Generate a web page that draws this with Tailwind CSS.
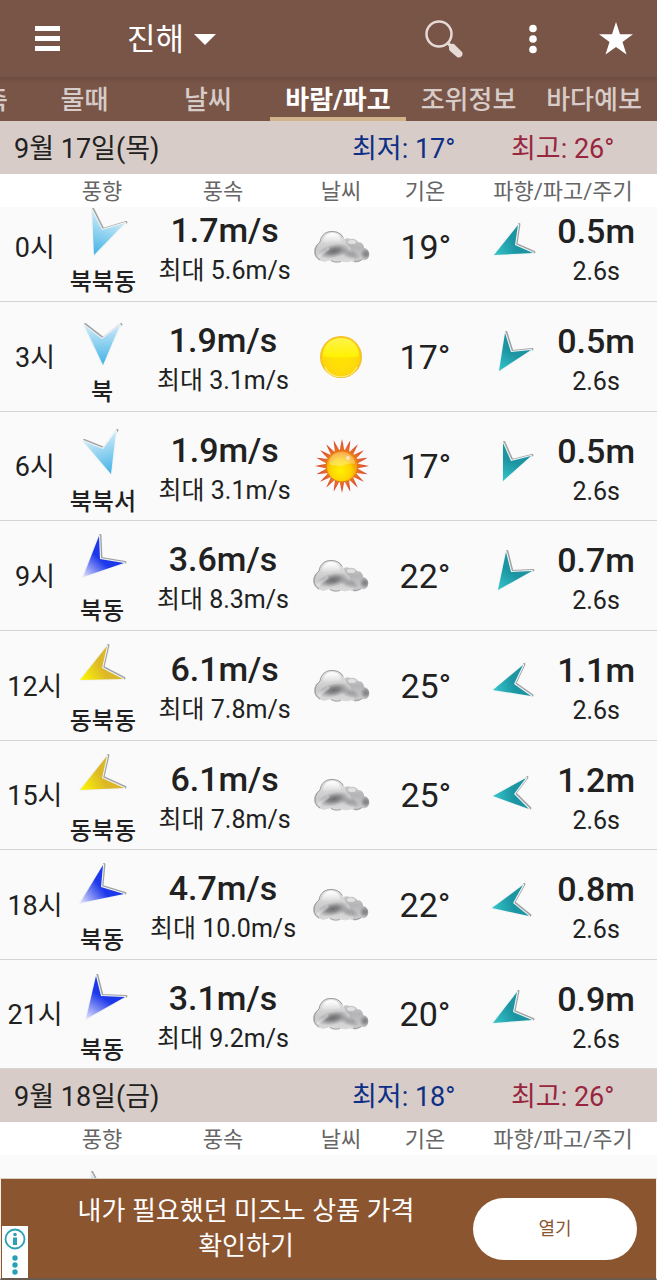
<!DOCTYPE html>
<html lang="ko">
<head>
    <meta charset="UTF-8">
    <meta name="viewport" content="width=device-width, initial-scale=1.0">
    <script src="https://cdn.jsdelivr.net/npm/@tailwindcss/browser@4"></script>
    <title>진해 - 바람/파고</title>
</head>
<body class="h-screen flex flex-col overflow-hidden bg-[#fafafa] text-[#212121] font-['Roboto','Noto_Sans_CJK_KR',sans-serif]">

    <!-- Shared gradients and weather icons -->
    <svg class="absolute w-0 h-0" aria-hidden="true">
        <defs>
            <linearGradient id="cloudBack" x1="0" y1="0" x2="0" y2="1">
                <stop offset="0" stop-color="#dcdcdc"/>
                <stop offset="0.5" stop-color="#b4b4b6"/>
                <stop offset="1" stop-color="#cfcfd0"/>
            </linearGradient>
            <linearGradient id="cloudFront" x1="0" y1="0" x2="0" y2="1">
                <stop offset="0" stop-color="#e6e6e6"/>
                <stop offset="0.6" stop-color="#c9c9ca"/>
                <stop offset="1" stop-color="#dcdcdd"/>
            </linearGradient>
            <radialGradient id="cloudShade">
                <stop offset="0" stop-color="#6c6c70"/>
                <stop offset="0.4" stop-color="#77777b" stop-opacity="0.8"/>
                <stop offset="1" stop-color="#8c8c90" stop-opacity="0"/>
            </radialGradient>
            <linearGradient id="cloudShine" x1="0" y1="0" x2="0" y2="1">
                <stop offset="0" stop-color="#fff"/>
                <stop offset="1" stop-color="#fff" stop-opacity="0.1"/>
            </linearGradient>
            <linearGradient id="ballTop" x1="0" y1="0" x2="0" y2="1">
                <stop offset="0" stop-color="#fff34a"/>
                <stop offset="1" stop-color="#fff200"/>
            </linearGradient>
            <radialGradient id="ballBody" cx="0.5" cy="0.5" r="0.5">
                <stop offset="0" stop-color="#ffe600"/>
                <stop offset="0.85" stop-color="#ffd80c"/>
                <stop offset="1" stop-color="#f2b824"/>
            </radialGradient>
            <linearGradient id="rays" gradientUnits="userSpaceOnUse" x1="28" y1="1" x2="28" y2="13">
                <stop offset="0" stop-color="#d4382a"/>
                <stop offset="1" stop-color="#ea7a30"/>
            </linearGradient>
            <radialGradient id="sunBody" cx="0.45" cy="0.65" r="0.6">
                <stop offset="0" stop-color="#fff200"/>
                <stop offset="0.55" stop-color="#ffd200"/>
                <stop offset="1" stop-color="#f38510"/>
            </radialGradient>
            <clipPath id="cloudShape">
                <path d="M6 11C7 3 13 0 18 0c6 0 11 3 12 8 4-1 4-1 7 0 3-1 6 1 7 3 4 0 6 3 6 6 4 1 6 4 5 8-1 4-4 5-7 4-3 3-8 3-11 1-4 2-8 1-10 0-4 2-8 1-11-1-4 2-9 2-12-1-6-4-5-13 2-17z"/>
            </clipPath>
        </defs>
        <symbol id="cloud" viewBox="0 0 56 32">
            <g clip-path="url(#cloudShape)">
                <path d="M0 0h56v32H0z" fill="url(#cloudBack)"/>
                <path d="M0 0h28c4 8 2 12 8 16l6 16H0z" fill="url(#cloudFront)"/>
                <ellipse cx="20" cy="20" rx="16" ry="7" transform="rotate(-12 20 20)" fill="url(#cloudShade)"/>
                <ellipse cx="36" cy="23" rx="11" ry="5" transform="rotate(20 36 23)" fill="url(#cloudShade)" opacity="0.5"/>
                <ellipse cx="52" cy="23" rx="6" ry="6" fill="url(#cloudShade)" opacity="0.8"/>
                <path d="M9 12c0-6 4-10 9-10s9 3 9 9c-6-1-11 2-18 1z" fill="url(#cloudShine)"/>
                <ellipse cx="38" cy="11" rx="4" ry="2" fill="#fff" opacity="0.5"/>
                <path d="M5 26c2-5 6-4 10-9" fill="none" stroke="#fff" stroke-width="3" opacity="0.3"/>
            </g>
            <path d="M6 29C0 26-1 17 6 11 7 4 12 0.500 18 0.500c5 0 9 2 11 6M17 29.500c3 2 7 2 10 1M40 30c3 1 6 0 8-1.500" fill="none" stroke="#8a8a8c" stroke-width="0.800"/>
        </symbol>
        <symbol id="clear" viewBox="0 0 56 56">
            <circle cx="28" cy="28" r="21" fill="url(#ballBody)"/>
            <path d="M10 27c0-12 8-18 18-18s18 6 18 18c-7 2-12 1-18 1s-12 1-18-1z" fill="url(#ballTop)"/>
            <path d="M12 38c5 13 26 13 32 0" fill="none" stroke="#fff07a" stroke-width="1.200"/>
        </symbol>
        <symbol id="sunny" viewBox="0 0 56 56">
            <g id="rayGroup" fill="url(#rays)"></g>
            <circle cx="28" cy="28" r="16" fill="url(#sunBody)" stroke="#d9661a" stroke-width="0.800"/>
            <path d="M15 26c0-8 6-12 13-12s13 5 13 12c-8-2-11 3-16 2-4-1-7 0-10-2z" fill="#fff" opacity="0.3"/>
            <circle cx="34" cy="20" r="2" fill="#fff" opacity="0.6"/>
        </symbol>
    </svg>

    <!-- App bar -->
    <header class="h-[77px] shrink-0 bg-[#795548] text-white flex items-center pl-[35px] pr-6">
        <button aria-label="메뉴" class="w-[26px]">
            <svg viewBox="0 0 26 26" class="w-[26px] h-[26px]" fill="currentColor"><path d="M0 0h25v5H0zM0 10h25v5H0zM0 20h25v5H0z"/></svg>
        </button>
        <button class="ml-[66px] pt-0.5 flex items-center gap-2.5 text-[31px] leading-10">
            진해
            <svg viewBox="0 0 22 12" class="w-[22px] h-3" fill="currentColor"><path d="M0 0h22L11 11z"/></svg>
        </button>
        <div class="ml-auto flex items-center">
            <button aria-label="검색">
                <svg viewBox="0 0 38 38" class="w-[38px] h-[38px] text-[#e6d9d6]">
                    <circle cx="14" cy="14" r="12.500" fill="none" stroke="currentColor" stroke-width="2.500"/>
                    <path d="M22 24l2-2 4 4-3 2z" fill="currentColor"/>
                    <path d="M24 28c0-3 2-5 5-4l8 8c2 3-2 7-5 5l-7-6c-1-1-1-2-1-3z" fill="currentColor"/>
                </svg>
            </button>
            <button aria-label="더보기" class="ml-[66px]">
                <svg viewBox="0 0 8 30" class="w-2 h-[30px]" fill="currentColor"><circle cx="4" cy="4.500" r="3.800"/><circle cx="4" cy="15" r="3.800"/><circle cx="4" cy="25.500" r="3.800"/></svg>
            </button>
            <button aria-label="즐겨찾기" class="ml-[62px]">
                <svg viewBox="0 0 34 33" class="w-[34px] h-[33px]" fill="currentColor"><path d="M17 0l4 12.200h13L23.500 20l4 12.500L17 25 6.500 32.500l4-12.500L0 12.200h13z"/></svg>
            </button>
        </div>
    </header>

    <!-- Tabs -->
    <nav class="h-11 shrink-0 grid grid-cols-[23fr_123fr_124fr_136fr_125fr_126fr] grid-rows-[44px] bg-[#795548] bg-linear-to-b from-[#6e4c40] to-[#795548] to-15% text-[26px] leading-[46px] font-medium text-center text-[#d7ccc8] whitespace-nowrap">
        <a href="#" class="flex justify-end pr-[15px] overflow-hidden">관측</a>
        <a href="#">물때</a>
        <a href="#">날씨</a>
        <a href="#" class="text-white font-bold border-b-4 border-[#d2b48c]">바람/파고</a>
        <a href="#">조위정보</a>
        <a href="#">바다예보</a>
    </nav>

    <!-- Forecast by day -->
    <main id="forecast" class="flex-1 min-h-0 overflow-hidden"></main>

    <!-- Ad banner -->
    <aside class="relative h-[102px] shrink-0 border-t border-b-2 border-x border-t-[#d9cfc4] border-b-[#6b5a50] border-x-[#f5efe8] bg-[#8b5530] flex items-center pl-[18px] pr-[19px]">
        <p class="flex-1 px-10 text-center text-white text-[26px] leading-[35px] break-keep">내가 필요했던 미즈노 상품 가격 확인하기</p>
        <button class="w-[164px] h-[62px] rounded-full bg-white text-[#8b5530] text-lg">열기</button>
        <button aria-label="광고 정보" class="absolute left-px bottom-0 w-[26px] h-[52px] bg-white">
            <svg viewBox="0 0 26 52" class="w-[26px] h-[52px] text-[#2a9fb5]" fill="currentColor">
                <circle cx="13" cy="13" r="9.500" fill="none" stroke="currentColor" stroke-width="1.800"/>
                <circle cx="13" cy="8.500" r="1.800"/><path d="M11 11.500h4V19h-4z"/>
                <circle cx="13" cy="32" r="2.700"/><circle cx="13" cy="39" r="2.700"/><circle cx="13" cy="46" r="2.700"/>
            </svg>
        </button>
    </aside>

    <script>
        // Arrow fill: [colour at the point, colour at the wings]
        const colors = {
            sky: ["#42b2e6", "#cdeaf8"],
            blue: ["#e6e4ff", "#1c38ea"],
            yellow: ["#fffb00", "#dcb828"],
            teal: ["#34c6ca", "#1c94a2"]
        };

        // Arrows: wing, notch, wing, point
        const days = [
            { date: "9월 17일(목)", low: 17, high: 26, scrolled: true, rows: [
                { hour: 0, color: "sky", wind: [19,6, 29,26, 52,19, 21,51], dir: "북북동", speed: "1.7", max: "5.6", sky: "cloud", temp: 19, wave: [31,11, 28,31, 46,39, 7,41], height: "0.5" },
                { hour: 3, color: "sky", wind: [12,11, 30,25, 48,11, 31,51], dir: "북", speed: "1.9", max: "3.1", sky: "clear", temp: 17, wave: [19,9, 25,28, 45,26, 13,47], height: "0.5" },
                { hour: 6, color: "sky", wind: [10,17, 30,25, 43,7, 38,50], dir: "북북서", speed: "1.9", max: "3.1", sky: "sunny", temp: 17, wave: [16,9, 24,27, 44,22, 16,47], height: "0.5" },
                { hour: 9, color: "blue", wind: [27,3, 28,26, 52,30, 11,44], dir: "북동", speed: "3.6", max: "8.3", sky: "cloud", temp: 22, wave: [20,9, 25,29, 46,28, 12,47], height: "0.7" },
                { hour: 12, color: "yellow", wind: [34,3, 29,25, 50,36, 7,37], dir: "동북동", speed: "6.1", max: "7.8", sky: "cloud", temp: 25, wave: [36,12, 27,31, 44,43, 6,37], height: "1.1" },
                { hour: 15, color: "yellow", wind: [34,3, 29,25, 51,35, 7,37], dir: "동북동", speed: "6.1", max: "7.8", sky: "cloud", temp: 25, wave: [39,15, 27,31, 42,46, 6,33], height: "1.2" },
                { hour: 18, color: "blue", wind: [31,3, 29,25, 52,32, 8,41], dir: "북동", speed: "4.7", max: "10.0", sky: "cloud", temp: 22, wave: [37,13, 27,31, 43,44, 6,36], height: "0.8" },
                { hour: 21, color: "blue", wind: [24,4, 29,24, 53,25, 14,47], dir: "북동", speed: "3.1", max: "9.2", sky: "cloud", temp: 20, wave: [31,10, 27,30, 46,38, 7,41], height: "0.9" }
            ]},
            { date: "9월 18일(금)", low: 18, high: 26, rows: [], next: { color: "sky", wind: [19,6, 29,26, 52,19, 21,51] } }
        ];

        let arrowCount = 0;
        function arrow(p, color, cls, size) {
            const id = "arrow" + arrowCount++;
            const [tip, wing] = colors[color];
            // sky arrows fade towards the wings, the others towards the notch
            const x2 = color === "sky" ? (p[0] + p[4]) / 2 : p[2];
            const y2 = color === "sky" ? (p[1] + p[5]) / 2 : p[3];
            return `<svg viewBox="0 0 ${size} ${size}" class="${cls}" stroke-linejoin="round" stroke-linecap="round">
                <linearGradient id="${id}" gradientUnits="userSpaceOnUse" x1="${p[6]}" y1="${p[7]}" x2="${x2}" y2="${y2}">
                    <stop offset="0" stop-color="${tip}"/><stop offset="1" stop-color="${wing}"/>
                </linearGradient>
                <polyline points="${p.slice(0, 6)}" fill="none" stroke="#a2a2a2" stroke-width="2.500" transform="translate(1.200 -0.800)"/>
                <polygon points="${p}" fill="#fff" stroke="#f0f4f5" stroke-width="2.200"/>
                <polygon points="${p}" fill="url(#${id})"/>
            </svg>`;
        }

        function row(r) {
            return `<tr class="h-[110px] nth-[3n]:h-[109px] last:h-[109px] grid grid-cols-[70fr_64fr_178fr_58fr_110fr_66fr_100fr] pr-[11px] text-center whitespace-nowrap border-b border-[#d4d4d4]">
                <th class="self-center pt-0.5 font-normal text-[27px] leading-8">${r.hour}시</th>
                <td class="flex flex-col items-center pt-3 text-2xl leading-9 font-medium">${arrow(r.wind, r.color, "w-[60px] h-[60px] shrink-0", 60)}${r.dir}</td>
                <td class="pt-[17px]">
                    <div class="text-[34px] leading-[42px] font-medium">${r.speed}m/s</div>
                    <div class="text-[25px] leading-10">최대 ${r.max}m/s</div>
                </td>
                <td class="self-center flex justify-center"><svg class="w-14 h-14" role="img"><use href="#${r.sky}"/></svg></td>
                <td class="self-center text-[34px] leading-10">${r.temp}°</td>
                <td class="flex justify-center pt-[22px]">${arrow(r.wave, "teal", "w-[54px] h-[54px]", 54)}</td>
                <td class="pt-[18px]">
                    <div class="text-[34px] leading-[42px] font-medium">${r.height}m</div>
                    <div class="text-[25px] leading-10">2.6s</div>
                </td>
            </tr>`;
        }

        function nextRow(r) {
            return `<tr class="grid grid-cols-[70fr_64fr_512fr] pr-[11px]">
                <td></td>
                <td class="flex justify-center pt-3">${arrow(r.wind, r.color, "w-[60px] h-[60px] shrink-0", 60)}</td>
            </tr>`;
        }

        // Sun rays
        let rays = "";
        for (let a = 0; a < 360; a += 18) {
            rays += `<path d="M25.500 13L28 1l2.500 12z" transform="rotate(${a} 28 28)"/>`;
        }
        document.getElementById("rayGroup").innerHTML = rays;

        document.getElementById("forecast").innerHTML = days.map(day => `
            <section>
                <h2 class="h-[53px] pt-0.5 relative z-10 grid grid-cols-[352fr_159fr_146fr] items-center bg-[#d7ccc8] text-[27px] leading-9">
                    <span class="pl-3.5">${day.date}</span>
                    <span class="text-[#0d2f86]">최저: ${day.low}°</span>
                    <span class="text-[#98263f]">최고: ${day.high}°</span>
                </h2>
                <table class="block">
                    <thead class="block relative z-10 bg-white text-[22px] leading-[35px] text-[#666]">
                        <tr class="h-[33px] grid grid-cols-[70fr_64fr_178fr_58fr_110fr_166fr] pr-[11px] whitespace-nowrap *:font-normal">
                            <td></td><th>풍향</th><th>풍속</th><th>날씨</th><th>기온</th><th>파향/파고/주기</th>
                        </tr>
                    </thead>
                    <tbody class="block ${day.scrolled ? "-mt-[15px]" : ""}">${day.rows.map(row).join("")}${day.next ? nextRow(day.next) : ""}</tbody>
                </table>
            </section>`).join("");
    </script>

</body>
</html>
